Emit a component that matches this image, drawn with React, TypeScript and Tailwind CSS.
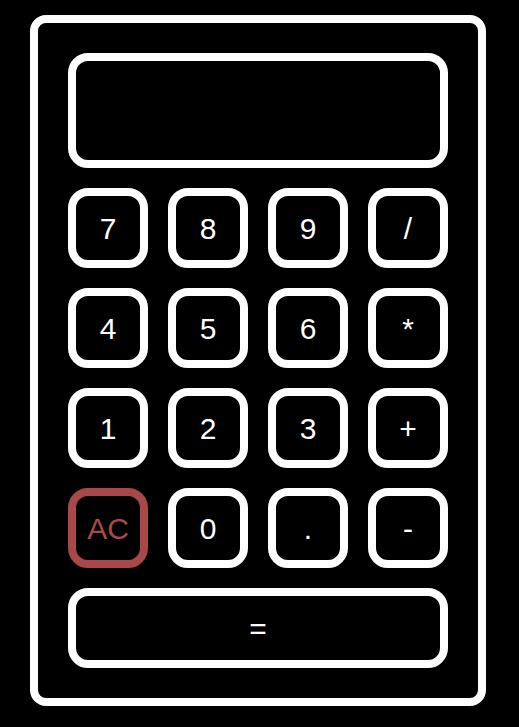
import React from "react";

const rows: string[][] = [
  ["7", "8", "9", "/"],
  ["4", "5", "6", "*"],
  ["1", "2", "3", "+"],
  ["AC", "0", ".", "-"],
];

export default function App() {
  return (
    <div className="min-h-[727px] w-full bg-black pt-[15px] pl-[30px]" style={{ fontFamily: '"Liberation Sans", Arial, sans-serif' }}>
      <div className="flex w-[456px] flex-col gap-5 rounded-[16px] border-[8px] border-white p-[30px]">
        <div className="h-[115px] w-full rounded-[20px] border-[8px] border-white" />
        {rows.map((row, i) => (
          <div key={i} className="flex gap-5">
            {row.map((k) => (
              <button
                key={k}
                className={
                  k === "AC"
                    ? "flex h-20 w-20 items-center justify-center rounded-[20px] border-[8px] border-[#a94848] text-[30px] text-[#a94848]"
                    : "flex h-20 w-20 items-center justify-center rounded-[20px] border-[8px] border-white text-[30px] text-white"
                }
              >
                {k}
              </button>
            ))}
          </div>
        ))}
        <button className="flex h-20 w-full items-center justify-center rounded-[20px] border-[8px] border-white text-[30px] text-white">
          =
        </button>
      </div>
    </div>
  );
}
